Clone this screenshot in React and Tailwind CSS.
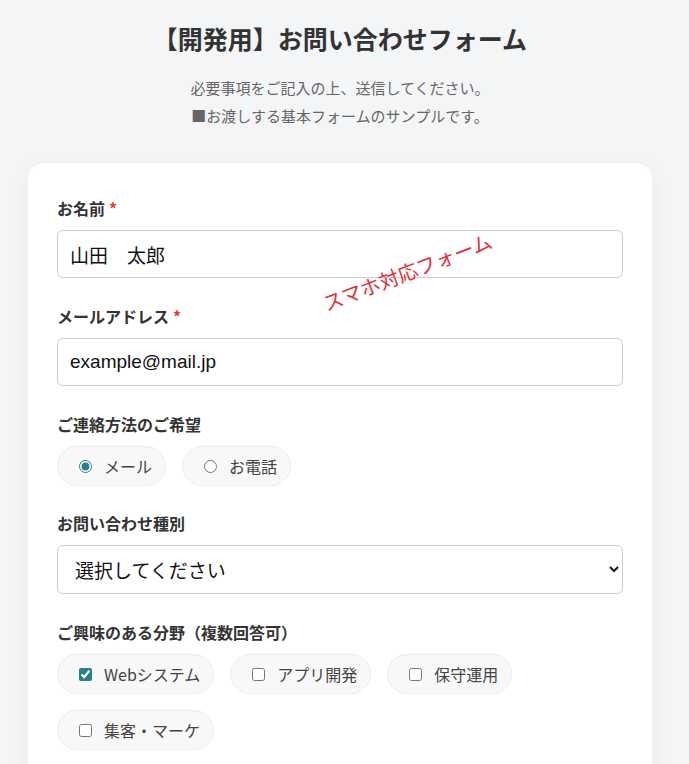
import React, { useState } from 'react';

const jp = { fontFamily: '"Noto Sans CJK JP", "Noto Sans", sans-serif' };

function Label({ children, required }) {
  return (
    <div className="mb-[11px] text-[16px] leading-[22px] font-bold text-[#333]">
      {children}
      {required && <span className="ml-1 text-[#e53935]">*</span>}
    </div>
  );
}

function Pill({ children }) {
  return (
    <label className="flex items-center gap-3 h-10 pl-[21px] pr-[13px] rounded-full border border-[#ececec] bg-[#f8f8f8] text-[16px] leading-[22px] text-[#444] cursor-pointer">
      {children}
    </label>
  );
}

export default function App() {
  const [contact, setContact] = useState('mail');
  const [interests, setInterests] = useState(['web']);

  const fields = [
    { id: 'web', label: 'Webシステム' },
    { id: 'app', label: 'アプリ開発' },
    { id: 'ops', label: '保守運用' },
    { id: 'mkt', label: '集客・マーケ' },
  ];

  const toggle = (id) =>
    setInterests((xs) => (xs.includes(id) ? xs.filter((x) => x !== id) : [...xs, id]));

  return (
    <div className="min-h-screen bg-[#f4f5f7]" style={jp}>
      <div className="w-full max-w-[680px] px-7 pt-[19px]">
        {/* Header */}
        <h1 className="text-center text-[25px] leading-[38px] font-bold text-[#333]">
          【開発用】お問い合わせフォーム
        </h1>
        <p className="mt-[17px] text-center text-[15px] leading-[28px] text-[#666]">
          必要事項をご記入の上、送信してください。
          <br />
          ■お渡しする基本フォームのサンプルです。
        </p>

        {/* Card */}
        <form className="relative mt-[33px] rounded-2xl bg-white pt-[34px] px-[29px] pb-8 shadow-[0_4px_20px_rgba(0,0,0,0.05)]">
          <span className="absolute z-10 left-[290px] top-[96px] -rotate-[21deg] whitespace-nowrap text-[20px] leading-[26px] text-[#e0303a] pointer-events-none">
            スマホ対応フォーム
          </span>

          <div className="mb-[27px]">
            <Label required>お名前</Label>
            <input
              type="text"
              defaultValue="山田　太郎"
              className="block w-full h-12 rounded-md border border-[#cfcfcf] px-3 text-[19px] text-[#111]"
              style={{ fontFamily: '"Liberation Sans", "Noto Sans CJK JP", sans-serif' }}
            />
          </div>

          <div className="mb-[27px]">
            <Label required>メールアドレス</Label>
            <input
              type="email"
              defaultValue="example@mail.jp"
              className="block w-full h-12 rounded-md border border-[#cfcfcf] px-3 text-[19px] text-[#111]"
              style={{ fontFamily: '"Liberation Sans", "Noto Sans CJK JP", sans-serif' }}
            />
          </div>

          <div className="mb-[26px]">
            <Label>ご連絡方法のご希望</Label>
            <div className="flex flex-wrap gap-4">
              <Pill>
                <input
                  type="radio"
                  name="contact"
                  checked={contact === 'mail'}
                  onChange={() => setContact('mail')}
                  className="accent-[#2a7f8c] w-[13px] h-[13px]"
                />
                メール
              </Pill>
              <Pill>
                <input
                  type="radio"
                  name="contact"
                  checked={contact === 'tel'}
                  onChange={() => setContact('tel')}
                  className="accent-[#2a7f8c] w-[13px] h-[13px]"
                />
                お電話
              </Pill>
            </div>
          </div>

          <div className="mb-[27px]">
            <Label>お問い合わせ種別</Label>
            <select
              className="block w-full h-[49px] rounded-md border border-[#cfcfcf] bg-white pl-[13px] pr-2 text-[19px] text-[#111]"
              defaultValue=""
            >
              <option value="">選択してください</option>
              <option value="estimate">お見積り</option>
              <option value="other">その他</option>
            </select>
          </div>

          <div>
            <Label>ご興味のある分野（複数回答可）</Label>
            <div className="flex flex-wrap gap-4">
              {fields.map((f) => (
                <Pill key={f.id}>
                  <input
                    type="checkbox"
                    checked={interests.includes(f.id)}
                    onChange={() => toggle(f.id)}
                    className="accent-[#2a7f8c] w-[13px] h-[13px]"
                  />
                  {f.label}
                </Pill>
              ))}
            </div>
          </div>
        </form>
      </div>
    </div>
  );
}
